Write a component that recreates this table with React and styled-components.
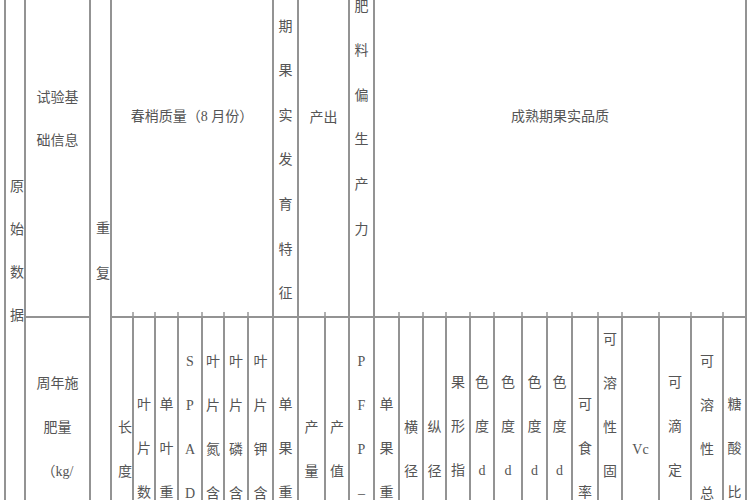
import React from 'react';
import styled, { createGlobalStyle } from 'styled-components';

const GlobalStyle = createGlobalStyle`
  html, body {
    margin: 0;
    padding: 0;
    background: #fff;
  }
  body {
    height: 500px;
    overflow: hidden;
  }
`;

// widths of the columns between the ruled lines (px)
const columns = [
    18, 63, 19, 20, 20, 21, 22, 20, 22, 23, 23, 25, 22, 23,
    23, 22, 21, 22, 22, 26, 23, 23, 24, 22, 35, 30, 30, 21,
];

// second header row, left to right from the 长度 column
const subHeads = [
    { text: '长度', top: 110, end: true },
    { text: '叶片数', top: 87, tick: true },
    { text: '单叶重', top: 87, tick: true },
    { text: 'SPAD', top: 44, tick: true },
    { text: '叶片氮含', top: 44, tick: true },
    { text: '叶片磷含', top: 44, tick: true },
    { text: '叶片钾含', top: 44, tick: true },
    { text: '单果重', top: 87 },
    { text: '产量', top: 110 },
    { text: '产值', top: 110, tick: true },
    { text: 'PFP–', top: 44 },
    { text: '单果重', top: 87 },
    { text: '横径', top: 110, tick: true },
    { text: '纵径', top: 110, tick: true },
    { text: '果形指', top: 65, tick: true },
    { text: '色度d', top: 65, tick: true },
    { text: '色度d', top: 65, tick: true },
    { text: '色度d', top: 65, tick: true },
    { text: '色度d', top: 65, tick: true },
    { text: '可食率', top: 87, tick: true },
    { text: '可溶性固', top: 22, tick: true },
    { text: ['Vc'], top: 132, tick: true },
    { text: '可滴定', top: 65, tick: true },
    { text: '可溶性总', top: 44, tick: true },
    { text: '糖酸比', top: 87, tick: true },
];

const Table = () => {
    return (
        <Grid>
            <Cell $col="1" $row="1 / 3" $end>
                <Lines lines={[...'原始数据']} top={186} lh={43} />
            </Cell>
            <Cell $col="2" $row="1">
                <Lines lines={['试验基', '础信息']} top={97} lh={43} />
            </Cell>
            <Cell $col="3" $row="1 / 3" $end>
                <Lines lines={[...'重复']} top={228} lh={45} />
            </Cell>
            <Cell $col="4 / span 7" $row="1">
                <Lines lines={['春梢质量（8 月份）']} top={117} />
            </Cell>
            <Cell $col="11" $row="1">
                <Lines lines={[...'期果实发育特征']} top={27} lh={44.6} />
            </Cell>
            <Cell $col="12 / span 2" $row="1">
                <Lines lines={['产出']} top={118} />
            </Cell>
            <Cell $col="14" $row="1">
                <Lines lines={[...'肥料偏生产力']} top={7} lh={44.6} />
            </Cell>
            <Cell $col="15 / span 14" $row="1">
                <Lines lines={['成熟期果实品质']} top={117} />
            </Cell>

            <Cell $col="2" $row="2">
                <Lines lines={['周年施', '肥量', '（kg/']} top={66} />
            </Cell>
            {subHeads.map((h, i) => (
                <Cell key={i} $col={String(i + 4)} $row="2" $end={h.end} $tick={h.tick}>
                    <Lines
                        lines={Array.isArray(h.text) ? h.text : [...h.text]}
                        top={h.top}
                    />
                </Cell>
            ))}
        </Grid>
    );
};

// top is the centre of the first line, measured from the cell top
const Lines = ({ lines, top, lh = 44 }) => (
    <Stack $top={top - lh / 2} $lh={lh}>
        {lines.map((l, i) => (
            <Line key={i}>{l}</Line>
        ))}
    </Stack>
);

const App = () => (
    <>
        <GlobalStyle />
        <Table />
    </>
);

const Grid = styled.div`
    display: grid;
    grid-template-columns: ${columns.map((w) => `${w}px`).join(' ')};
    grid-template-rows: 316px 200px;
    gap: 2px;
    width: fit-content;
    margin-left: 4px;
    padding: 0 2px;
    background: #939393;
    font-family: "Liberation Serif", "Noto Sans CJK SC", serif;
    font-size: 14px;
    color: #555;
`;

const Cell = styled.div`
    position: relative;
    background: #fff;
    min-width: 0;
    grid-column: ${(p) => p.$col};
    grid-row: ${(p) => p.$row};
    display: flex;
    flex-direction: column;
    align-items: ${(p) => (p.$end ? 'flex-end' : 'center')};

    &::before {
        content: '';
        display: ${(p) => (p.$tick ? 'block' : 'none')};
        position: absolute;
        top: -6px;
        left: -2px;
        width: 2px;
        height: 4px;
        background: #b0b0b0;
    }
`;

const Stack = styled.div`
    display: flex;
    flex-direction: column;
    align-items: center;
    margin-top: ${(p) => p.$top}px;
    line-height: ${(p) => p.$lh}px;
`;

const Line = styled.span`
    display: block;
    white-space: nowrap;
`;

export default App;
